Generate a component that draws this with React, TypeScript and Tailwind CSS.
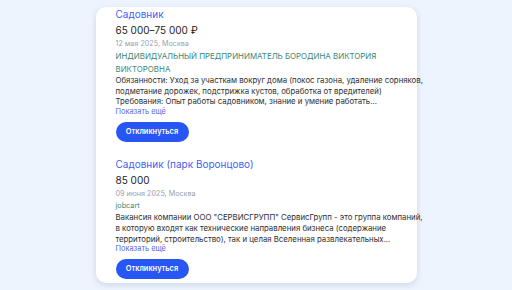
import React from 'react';

type Vacancy = {
  title: string;
  salary: string;
  meta: string;
  company: string[];
  upper?: boolean;
  lines: string[];
};

const vacancies: Vacancy[] = [
  {
    title: 'Садовник',
    salary: '65 000–75 000 ₽',
    meta: '12 мая 2025, Москва',
    company: ['ИНДИВИДУАЛЬНЫЙ ПРЕДПРИНИМАТЕЛЬ БОРОДИНА ВИКТОРИЯ', 'ВИКТОРОВНА'],
    upper: true,
    lines: [
      'Обязанности: Уход за участкам вокруг дома (покос газона, удаление сорняков,',
      'подметание дорожек, подстрижка кустов, обработка от вредителей)',
      'Требования: Опыт работы садовником, знание и умение работать...',
    ],
  },
  {
    title: 'Садовник (парк Воронцово)',
    salary: '85 000',
    meta: '09 июня 2025, Москва',
    company: ['jobcart'],
    lines: [
      'Вакансия компании ООО "СЕРВИСГРУПП" СервисГрупп - это группа компаний,',
      'в которую входят как технические направления бизнеса (содержание',
      'территорий, строительство), так и целая Вселенная развлекательных...',
    ],
  },
];

function VacancyItem({ v }: { v: Vacancy }) {
  return (
    <div className="flex flex-col items-start">
      <a className="text-[10px] leading-[14px] text-[#3f5ff0]">{v.title}</a>
      <div className="mt-[2px] text-[10px] leading-[14px] text-[#1c1c1c]">{v.salary}</div>
      <div className="text-[7.2px] leading-[13px] text-[#9aa1ab]">{v.meta}</div>
      <div
        className={
          v.upper
            ? 'text-[7.9px] leading-[12.5px] text-[#3a8878]'
            : 'text-[7.3px] leading-[12.5px] text-[#3a8878]'
        }
      >
        {v.company.map((c) => (
          <div key={c} className="whitespace-nowrap">
            {c}
          </div>
        ))}
      </div>
      <div className="text-[7.8px] leading-[10.7px] text-[#2e2e2e]">
        {v.lines.map((l) => (
          <div key={l} className="whitespace-nowrap">
            {l}
          </div>
        ))}
      </div>
      <a className="text-[7.4px] leading-[10.5px] text-[#5068e6]">Показать ещё</a>
      <button className="mt-[4px] h-[20px] w-[73px] rounded-full bg-[#2756f4] text-[7.4px] font-semibold text-white">
        Откликнуться
      </button>
    </div>
  );
}

export default function App() {
  return (
    <div
      className="flex h-[290px] w-full justify-center overflow-hidden bg-[#eef4fe] pt-[7px]"
      style={{ fontFamily: 'Inter, "Noto Sans", sans-serif' }}
    >
      <div className="flex h-[276px] w-[321px] flex-col gap-[15px] rounded-[10px] bg-white pl-[20px] pr-[11px] shadow-[0_2px_6px_rgba(60,80,120,0.18)]">
        {vacancies.map((v) => (
          <VacancyItem key={v.title} v={v} />
        ))}
      </div>
    </div>
  );
}
